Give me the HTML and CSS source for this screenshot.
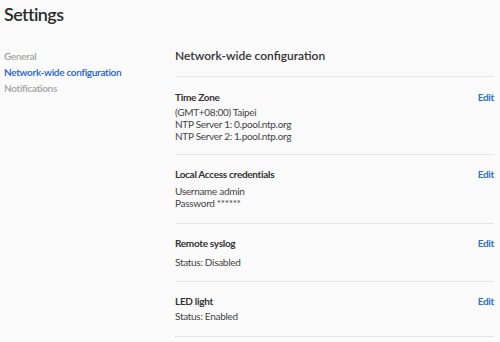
FILE: index.html
```html
<!DOCTYPE html>
<html lang="en">
<head>
  <meta charset="UTF-8">
  <meta name="viewport" content="width=device-width, initial-scale=1.0">
  <title>Settings</title>
  <link rel="stylesheet" href="styles.css">
</head>
<body>
  <h1 class="page-title">Settings</h1>
  <div class="layout">
    <nav class="side-nav">
      <a class="nav-item">General</a>
      <a class="nav-item active">Network-wide configuration</a>
      <a class="nav-item">Notifications</a>
    </nav>
    <main class="content">
      <h2 class="content-title">Network-wide configuration</h2>
      <section class="setting timezone">
        <div class="setting-head">
          <span class="setting-name">Time Zone</span>
          <a class="edit-link">Edit</a>
        </div>
        <div class="setting-body">
          <div>(GMT+08:00) Taipei</div>
          <div>NTP Server 1: 0.pool.ntp.org</div>
          <div>NTP Server 2: 1.pool.ntp.org</div>
        </div>
      </section>
      <section class="setting credentials">
        <div class="setting-head">
          <span class="setting-name">Local Access credentials</span>
          <a class="edit-link">Edit</a>
        </div>
        <div class="setting-body">
          <div>Username admin</div>
          <div>Password ******</div>
        </div>
      </section>
      <section class="setting syslog">
        <div class="setting-head">
          <span class="setting-name">Remote syslog</span>
          <a class="edit-link">Edit</a>
        </div>
        <div class="setting-body">
          <div>Status: Disabled</div>
        </div>
      </section>
      <section class="setting led">
        <div class="setting-head">
          <span class="setting-name">LED light</span>
          <a class="edit-link">Edit</a>
        </div>
        <div class="setting-body">
          <div>Status: Enabled</div>
        </div>
      </section>
    </main>
  </div>
</body>
</html>
```

FILE: styles.css
```css
body {
  margin: 0;
  font-family: 'Lato', sans-serif;
  background-color: #fafafa;
  color: #333333;
}
.page-title {
  margin: 0;
  padding: 0 4px;
  font-size: 18px;
  line-height: 28px;
  font-weight: 600;
  letter-spacing: -0.6px;
  color: #2b2b2b;
}
.layout {
  display: grid;
  grid-template-columns: 175px 1fr;
  margin-top: 20px;
  padding-right: 6px;
}
.side-nav {
  display: flex;
  flex-direction: column;
  padding-left: 4px;
}
.nav-item {
  font-size: 10px;
  line-height: 16px;
  font-weight: 600;
  letter-spacing: -0.3px;
  color: #a3a3a3;
  cursor: pointer;
}
.nav-item.active {
  color: #1a5ccc;
}
.content-title {
  margin: 0;
  font-size: 12px;
  line-height: 16px;
  font-weight: 600;
  color: #333333;
  padding-bottom: 12px;
  border-bottom: 1px solid #e4e4e4;
}
.setting {
  border-bottom: 1px solid #e4e4e4;
}
.setting-head {
  display: flex;
  justify-content: space-between;
  font-size: 10px;
  line-height: 12px;
  font-weight: 700;
  letter-spacing: -0.3px;
  color: #333333;
}
.edit-link {
  color: #2a6fdb;
  cursor: pointer;
}
.setting-body {
  font-size: 10px;
  line-height: 12px;
  letter-spacing: -0.3px;
  color: #444444;
}
.timezone {
  padding: 14px 0 12px;
}
.timezone .setting-body {
  margin-top: 3px;
}
.credentials {
  padding: 13px 0 14px;
}
.credentials .setting-body {
  margin-top: 5px;
}
.syslog {
  padding: 13px 0 13px;
}
.syslog .setting-body {
  margin-top: 7px;
}
.led {
  padding: 13px 0 14px;
}
.led .setting-body {
  margin-top: 3px;
}
```
